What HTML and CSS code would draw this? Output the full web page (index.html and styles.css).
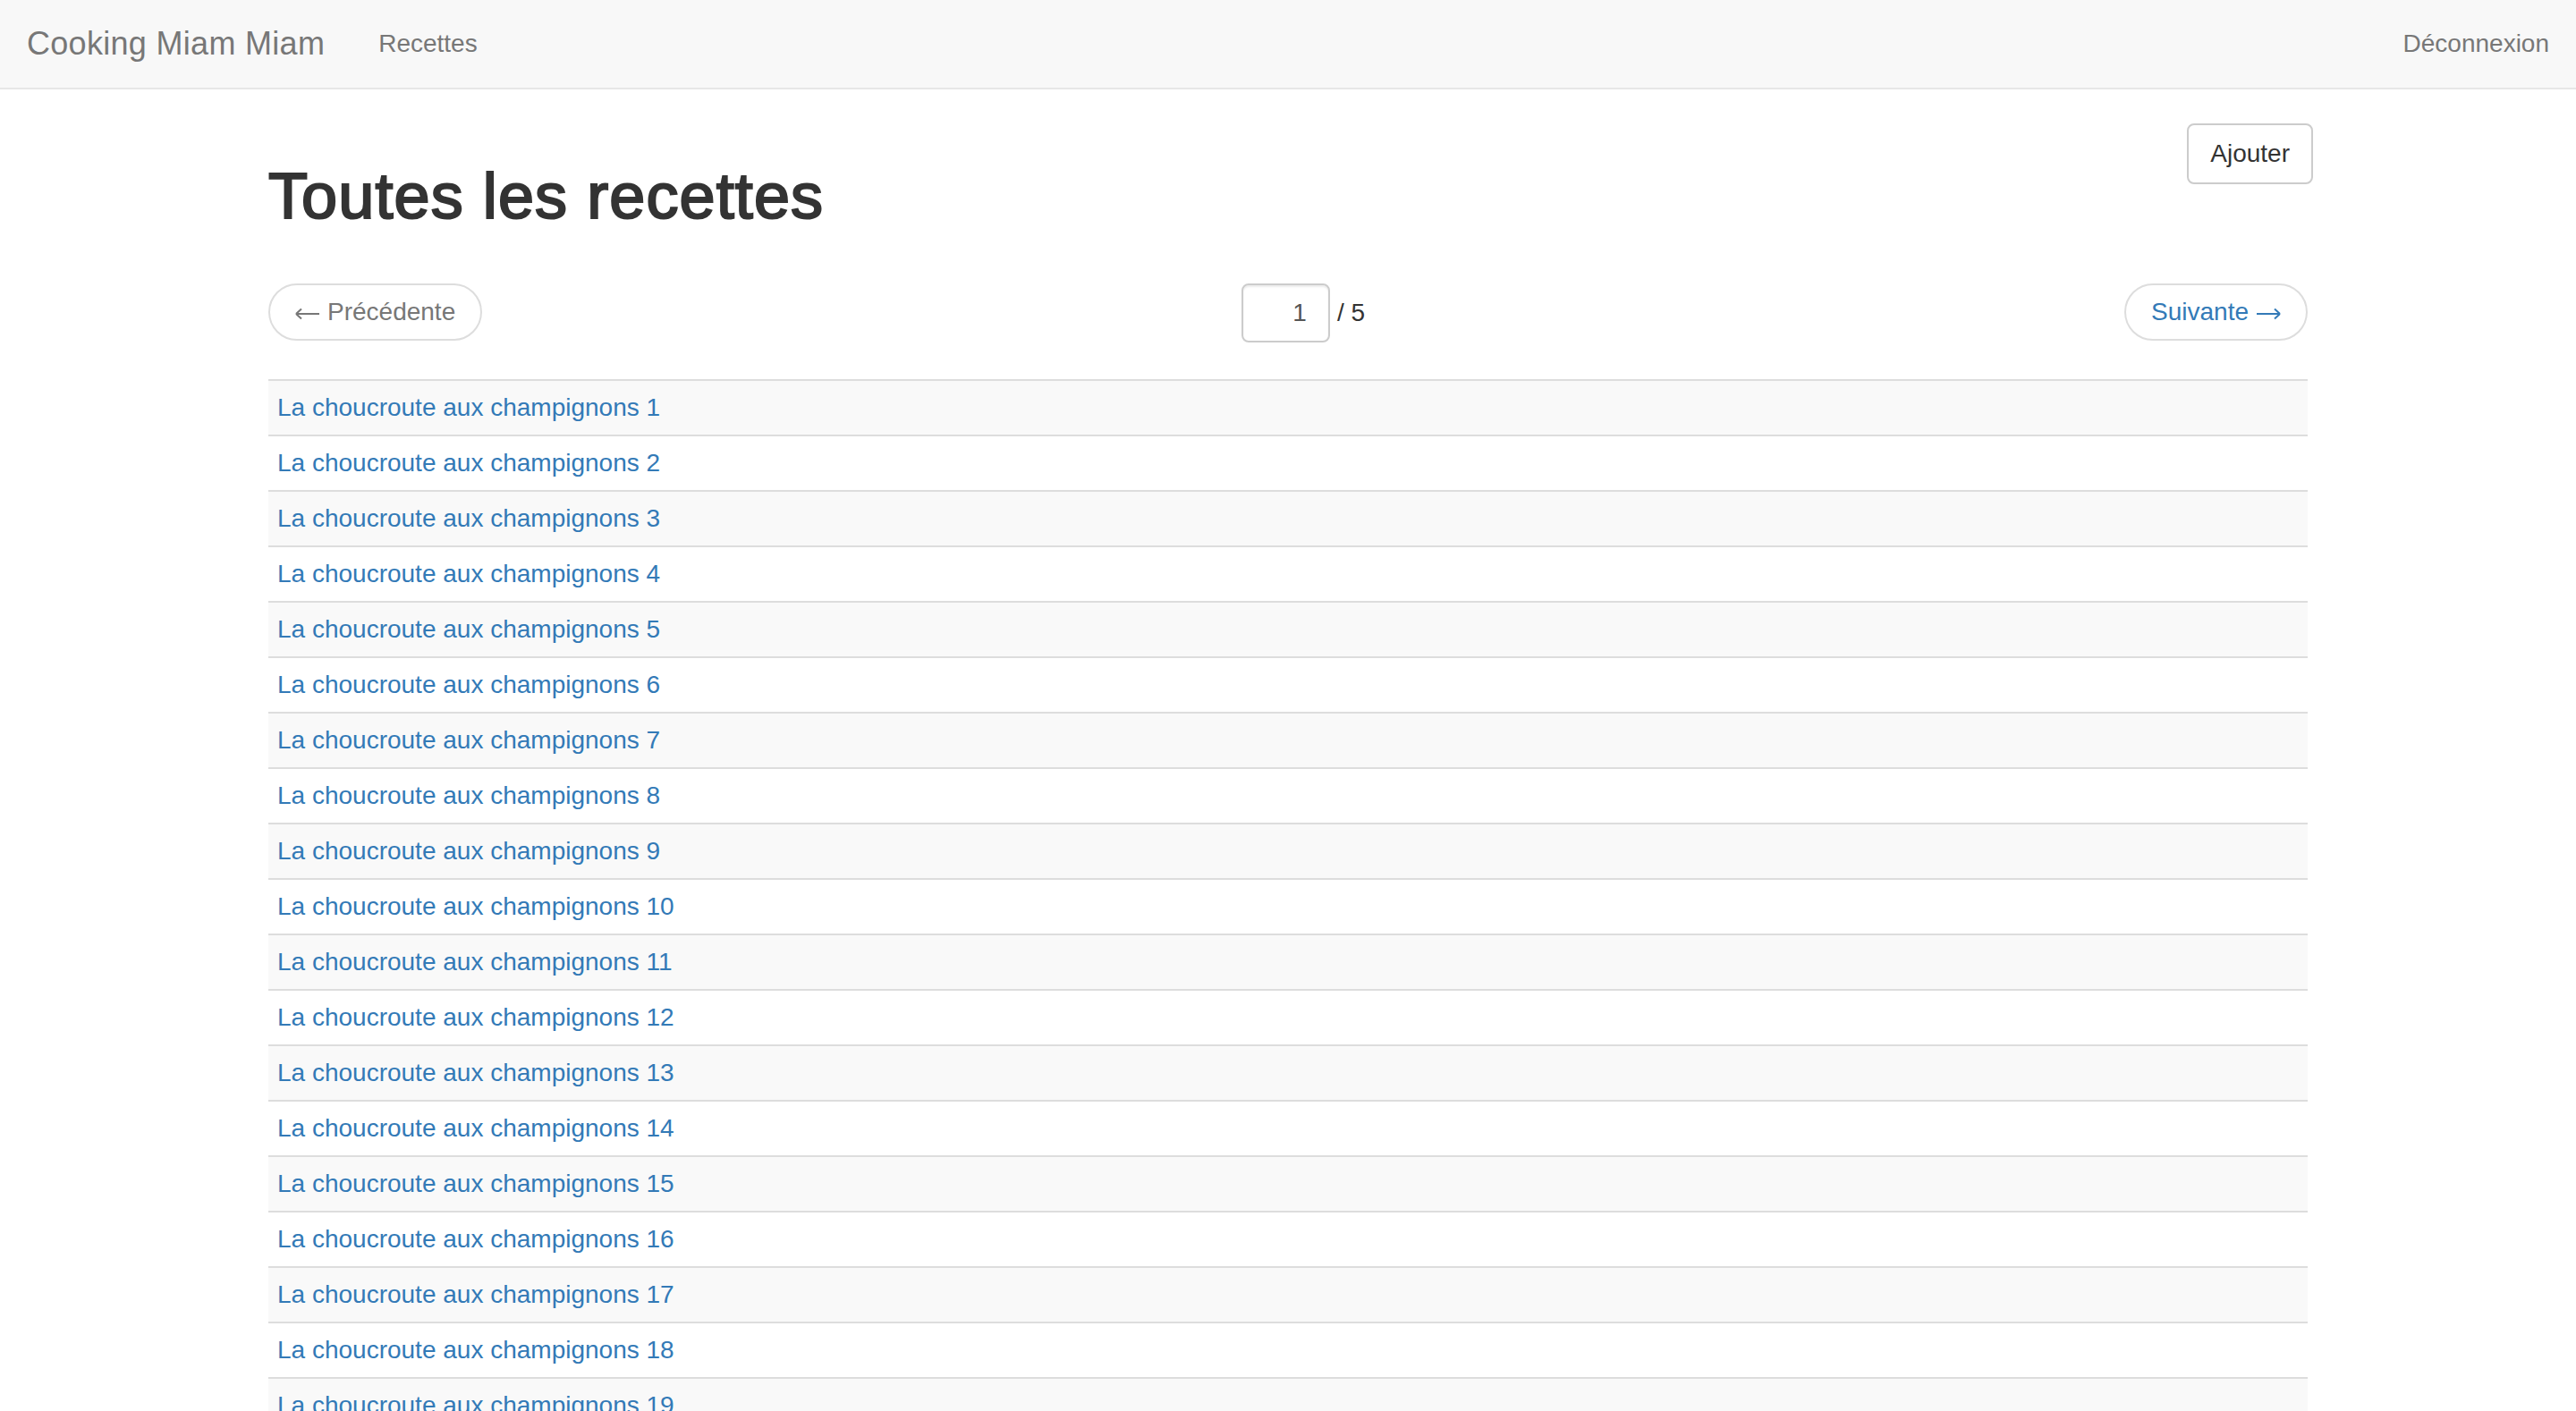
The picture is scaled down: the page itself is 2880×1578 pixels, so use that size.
FILE: index.html
```html
<!DOCTYPE html>
<html lang="fr">
<head>
<meta charset="utf-8">
<title>Cooking Miam Miam</title>
<link rel="stylesheet" href="styles.css">
</head>
<body>
<nav class="navbar">
  <div class="nav-left">
    <a class="brand" href="#">Cooking Miam Miam</a>
    <a class="nav-link" href="#">Recettes</a>
  </div>
  <a class="nav-link nav-right" href="#">Déconnexion</a>
</nav>
<main class="container">
  <div class="title-row">
    <h1 class="title">Toutes les recettes</h1>
    <button class="btn" type="button">Ajouter</button>
  </div>
  <div class="pager">
    <div class="pager-prev"><a class="pager-btn disabled" href="#"><svg class="arrow" width="28" height="14" viewBox="0 0 28 14" aria-hidden="true"><path d="M1 7H27M1 7L7 1.5M1 7L7 12.5" fill="none" stroke="currentColor" stroke-width="2"/></svg>Précédente</a></div>
    <div class="pager-mid"><input class="page-input" type="text" value="1"> / 5</div>
    <div class="pager-next"><a class="pager-btn" href="#">Suivante<svg class="arrow arrow-r" width="28" height="14" viewBox="0 0 28 14" aria-hidden="true"><path d="M1 7H27M27 7L21 1.5M27 7L21 12.5" fill="none" stroke="currentColor" stroke-width="2"/></svg></a></div>
  </div>
  <table class="recipes">
    <tbody>
      <tr><td><a href="#">La choucroute aux champignons 1</a></td></tr>
      <tr><td><a href="#">La choucroute aux champignons 2</a></td></tr>
      <tr><td><a href="#">La choucroute aux champignons 3</a></td></tr>
      <tr><td><a href="#">La choucroute aux champignons 4</a></td></tr>
      <tr><td><a href="#">La choucroute aux champignons 5</a></td></tr>
      <tr><td><a href="#">La choucroute aux champignons 6</a></td></tr>
      <tr><td><a href="#">La choucroute aux champignons 7</a></td></tr>
      <tr><td><a href="#">La choucroute aux champignons 8</a></td></tr>
      <tr><td><a href="#">La choucroute aux champignons 9</a></td></tr>
      <tr><td><a href="#">La choucroute aux champignons 10</a></td></tr>
      <tr><td><a href="#">La choucroute aux champignons 11</a></td></tr>
      <tr><td><a href="#">La choucroute aux champignons 12</a></td></tr>
      <tr><td><a href="#">La choucroute aux champignons 13</a></td></tr>
      <tr><td><a href="#">La choucroute aux champignons 14</a></td></tr>
      <tr><td><a href="#">La choucroute aux champignons 15</a></td></tr>
      <tr><td><a href="#">La choucroute aux champignons 16</a></td></tr>
      <tr><td><a href="#">La choucroute aux champignons 17</a></td></tr>
      <tr><td><a href="#">La choucroute aux champignons 18</a></td></tr>
      <tr><td><a href="#">La choucroute aux champignons 19</a></td></tr>
      <tr><td><a href="#">La choucroute aux champignons 20</a></td></tr>
    </tbody>
  </table>
</main>
</body>
</html>
```

FILE: styles.css
```css
* { box-sizing: border-box; }
html, body { margin: 0; padding: 0; }
body {
  font-family: "Liberation Sans", Arial, Helvetica, sans-serif;
  font-size: 28px;
  line-height: 40px;
  color: #333;
  background: #fff;
}
a { text-decoration: none; color: #337ab7; }

.navbar {
  height: 100px;
  background: #f8f8f8;
  border-bottom: 2px solid #e7e7e7;
  display: flex;
  align-items: center;
  justify-content: space-between;
  padding: 0 30px;
}
.nav-left { display: flex; align-items: center; }
.brand {
  font-size: 36px;
  line-height: 40px;
  color: #777;
  padding-right: 30px;
  letter-spacing: 0.3px;
}
.nav-link {
  color: #777;
  font-size: 28px;
  padding: 0 30px;
}
.nav-right { padding-right: 0; }

.container {
  width: 2280px;
  margin: 0 auto;
  padding-top: 38px;
}

.title-row {
  display: flex;
  justify-content: space-between;
  align-items: flex-start;
}
.title {
  margin: 42px 0 0;
  font-size: 72px;
  line-height: 79px;
  font-weight: 400;
  letter-spacing: 1.1px;
  -webkit-text-stroke: 2.2px #333;
  color: #333;
}
.btn {
  margin-right: -6px;
  height: 68px;
  padding: 0 24px;
  font-family: inherit;
  font-size: 28px;
  color: #333;
  background: #fff;
  border: 2px solid #ccc;
  border-radius: 8px;
}

.pager {
  margin: 58px 0 40px;
  height: 67px;
  display: grid;
  grid-template-columns: 1fr auto 1fr;
  align-items: start;
}
.pager-next { text-align: right; }
.pager-btn {
  display: inline-flex;
  align-items: center;
  gap: 8px;
  height: 64px;
  padding: 10px 28px;
  border: 2px solid #ddd;
  border-radius: 32px;
  background: #fff;
  color: #337ab7;
  line-height: 40px;
}
.pager-btn.disabled { color: #777; }
.arrow { display: block; margin-top: 4px; }
.pager-mid {
  padding-left: 34px;
  display: flex;
  align-items: center;
  gap: 8px;
  height: 66px;
  color: #333;
}
.page-input {
  width: 99px;
  height: 66px;
  border: 2px solid #ccc;
  border-radius: 8px;
  padding: 0 24px;
  text-align: right;
  font-family: inherit;
  font-size: 28px;
  color: #555;
  box-shadow: inset 0 2px 2px rgba(0,0,0,.075);
}

.recipes {
  width: 100%;
  border-collapse: collapse;
}
.recipes td {
  padding: 10px;
  border-top: 2px solid #ddd;
  line-height: 40px;
}
.recipes tr:nth-child(odd) td { background: #f9f9f9; }
```
